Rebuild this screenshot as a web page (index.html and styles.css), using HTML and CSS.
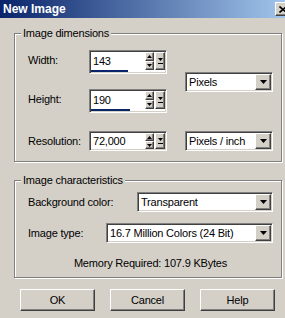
FILE: index.html
```html
<!DOCTYPE html>
<html>
<head>
<meta charset="utf-8">
<title>New Image</title>
<link rel="stylesheet" href="styles.css">
</head>
<body>
<div class="window">
  <div class="titlebar">
    <span class="title">New Image</span>
    <span class="close raised"><svg width="8" height="7" viewBox="0 0 8 7"><path d="M0.5 0.5L7.5 6.5M7.5 0.5L0.5 6.5" stroke="#000" stroke-width="1.6"/></svg></span>
  </div>

  <fieldset class="group dims">
    <legend>Image dimensions</legend>
    <div class="dims-grid">
      <span class="lbl">Width:</span>
      <div class="spin sunken">
        <div class="spin-main">
          <span class="spin-val">143</span>
          <span class="spin-btns">
            <span class="spin-btn raised"><svg width="5" height="3" viewBox="0 0 5 3"><path d="M2.5 0L5 3H0z" fill="#000"/></svg></span>
            <span class="spin-btn raised"><svg width="5" height="3" viewBox="0 0 5 3"><path d="M0 0H5L2.5 3z" fill="#000"/></svg></span>
          </span>
          <span class="pop raised"><svg width="5" height="6" viewBox="0 0 5 6"><path d="M0 0H5L2.5 3z" fill="#000"/><rect x="0" y="5" width="5" height="1" fill="#000"/></svg></span>
        </div>
        <div class="spin-bar" style="width:37px"></div>
      </div>
      <div class="combo sunken units">
        <span class="combo-text">Pixels</span>
        <span class="combo-btn raised"><svg width="7" height="4" viewBox="0 0 7 4"><path d="M0 0H7L3.5 4z" fill="#000"/></svg></span>
      </div>

      <span class="lbl">Height:</span>
      <div class="spin sunken">
        <div class="spin-main">
          <span class="spin-val">190</span>
          <span class="spin-btns">
            <span class="spin-btn raised"><svg width="5" height="3" viewBox="0 0 5 3"><path d="M2.5 0L5 3H0z" fill="#000"/></svg></span>
            <span class="spin-btn raised"><svg width="5" height="3" viewBox="0 0 5 3"><path d="M0 0H5L2.5 3z" fill="#000"/></svg></span>
          </span>
          <span class="pop raised"><svg width="5" height="6" viewBox="0 0 5 6"><path d="M0 0H5L2.5 3z" fill="#000"/><rect x="0" y="5" width="5" height="1" fill="#000"/></svg></span>
        </div>
        <div class="spin-bar" style="width:39px"></div>
      </div>

      <span class="lbl r3">Resolution:</span>
      <div class="spin sunken nobar r3">
        <div class="spin-main">
          <span class="spin-val">72,000</span>
          <span class="spin-btns">
            <span class="spin-btn raised"><svg width="5" height="3" viewBox="0 0 5 3"><path d="M2.5 0L5 3H0z" fill="#000"/></svg></span>
            <span class="spin-btn raised"><svg width="5" height="3" viewBox="0 0 5 3"><path d="M0 0H5L2.5 3z" fill="#000"/></svg></span>
          </span>
          <span class="pop raised"><svg width="5" height="6" viewBox="0 0 5 6"><path d="M0 0H5L2.5 3z" fill="#000"/><rect x="0" y="5" width="5" height="1" fill="#000"/></svg></span>
        </div>
      </div>
      <div class="combo sunken r3 res-units">
        <span class="combo-text">Pixels / inch</span>
        <span class="combo-btn raised"><svg width="7" height="4" viewBox="0 0 7 4"><path d="M0 0H7L3.5 4z" fill="#000"/></svg></span>
      </div>
    </div>
  </fieldset>

  <fieldset class="group chars">
    <legend>Image characteristics</legend>
    <div class="row">
      <span class="lbl">Background color:</span>
      <div class="combo sunken bg">
        <span class="combo-text">Transparent</span>
        <span class="combo-btn raised"><svg width="7" height="4" viewBox="0 0 7 4"><path d="M0 0H7L3.5 4z" fill="#000"/></svg></span>
      </div>
    </div>
    <div class="row type-row">
      <span class="lbl">Image type:</span>
      <div class="combo sunken type">
        <span class="combo-text">16.7 Million Colors (24 Bit)</span>
        <span class="combo-btn raised"><svg width="7" height="4" viewBox="0 0 7 4"><path d="M0 0H7L3.5 4z" fill="#000"/></svg></span>
      </div>
    </div>
    <div class="memory">Memory Required: 107.9 KBytes</div>
  </fieldset>

  <div class="buttons">
    <span class="btn raised">OK</span>
    <span class="btn raised">Cancel</span>
    <span class="btn raised">Help</span>
  </div>
</div>
</body>
</html>
```

FILE: styles.css
```css
html, body {
  margin: 0;
  padding: 0;
  overflow: hidden;
}

body {
  background: #d4d0c8;
  font-family: "Liberation Sans", Arial, sans-serif;
  font-size: 11px;
  letter-spacing: -0.2px;
  color: #000;
}

.window {
  width: 295px;
  height: 318px;
  background: #d4d0c8;
}

.titlebar {
  height: 18px;
  display: flex;
  align-items: center;
  justify-content: space-between;
  padding-left: 3px;
  background: linear-gradient(to right, #0a246a, #a6caf0);
}

.title {
  color: #fff;
  font-weight: bold;
  font-size: 12px;
  letter-spacing: 0;
  line-height: 18px;
}

.raised {
  background: #d4d0c8;
  border: 1px solid;
  border-color: #fff #404040 #404040 #fff;
  box-shadow: inset -1px -1px #808080;
  box-sizing: border-box;
  display: flex;
  align-items: center;
  justify-content: center;
}

.sunken {
  background: #fff;
  border: 1px solid;
  border-color: #808080 #fff #fff #808080;
  box-shadow: inset 1px 1px #404040, inset -1px -1px #d4d0c8;
  box-sizing: border-box;
  padding: 1px;
}

.close {
  width: 16px;
  height: 14px;
  margin-right: 4px;
}

.group {
  width: 268px;
  box-sizing: border-box;
  margin: 0 0 0 14px;
  border: 1px solid #808080;
  box-shadow: inset 1px 1px #fff, 1px 1px #fff;
  min-width: 0;
}

.group legend {
  padding: 0 2px;
  margin-left: -7px;
  line-height: 13px;
  background: #d4d0c8;
}

.dims {
  margin-top: 9px;
  padding: 10px 8px 10px 13px;
}

.chars {
  margin-top: 12px;
  padding: 5px 8px 7px 13px;
}

.dims-grid {
  display: grid;
  grid-template-columns: 61px 78px 106px;
  row-gap: 15px;
  align-items: start;
}

.lbl {
  line-height: 20px;
  white-space: nowrap;
}

.r3 {
  margin-top: 3px;
}

.spin {
  width: 78px;
  height: 24px;
  display: flex;
  flex-direction: column;
}

.spin.nobar {
  height: 20px;
}

.spin-main {
  display: flex;
  height: 18px;
}

.nobar .spin-main {
  height: 16px;
}

.spin-val {
  flex: 1;
  padding-left: 2px;
  line-height: 18px;
}

.nobar .spin-val {
  line-height: 16px;
}

.spin-btns {
  display: flex;
  flex-direction: column;
  width: 9px;
}

.spin-btn {
  height: 9px;
  width: 9px;
}

.nobar .spin-btn {
  height: 8px;
}

.pop {
  width: 10px;
  margin-left: 1px;
  flex-direction: column;
}

.spin-bar {
  height: 2px;
  background: #0a246a;
}

.combo {
  height: 20px;
  display: flex;
  align-items: center;
}

.combo-text {
  flex: 1;
  padding-left: 2px;
  white-space: nowrap;
  overflow: hidden;
}

.combo-btn {
  width: 16px;
  height: 16px;
}

.units,
.res-units {
  width: 88px;
  justify-self: end;
}

.units {
  grid-column: 3;
  grid-row: 1 / 3;
  align-self: center;
}

.row {
  display: flex;
  align-items: center;
  justify-content: space-between;
}

.type-row {
  margin-top: 11px;
}

.bg {
  width: 136px;
}

.type {
  width: 167px;
}

.memory {
  margin-top: 14px;
  line-height: 13px;
  text-align: center;
}

.buttons {
  display: flex;
  gap: 15px;
  margin-top: 11px;
  padding-left: 20px;
}

.btn {
  width: 75px;
  height: 22px;
}
```
